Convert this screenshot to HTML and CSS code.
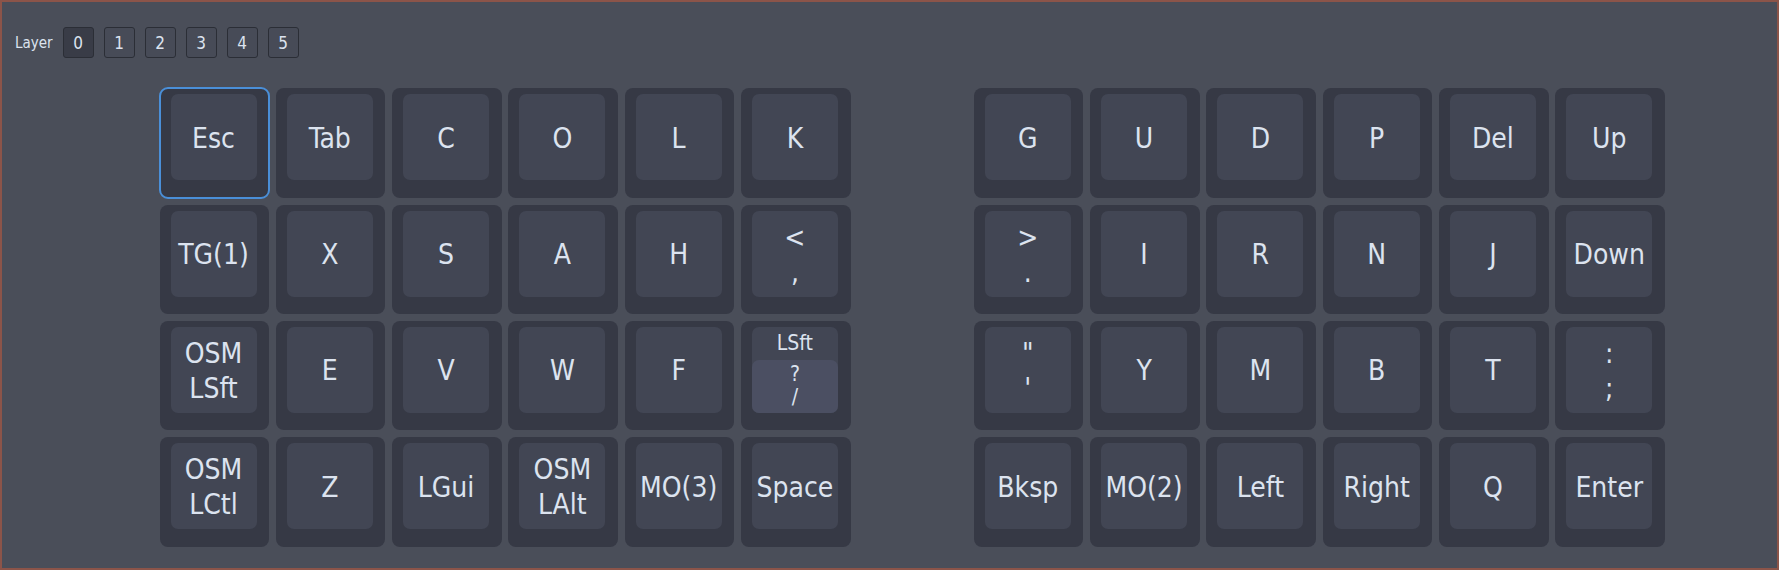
FILE: index.html
```html
<!DOCTYPE html>
<html lang="en">
<head>
    <meta charset="UTF-8">
    <title>Keymap</title>
    <link rel="stylesheet" href="styles.css">
</head>
<body>
    <div class="window">
        <!-- Layer selector -->
        <div class="layer-bar">
            <span class="layer-label">Layer</span>
            <button class="layer-btn active">0</button>
            <button class="layer-btn">1</button>
            <button class="layer-btn">2</button>
            <button class="layer-btn">3</button>
            <button class="layer-btn">4</button>
            <button class="layer-btn">5</button>
        </div>

        <div class="board">
            <!-- Left half -->
            <div class="half">
                <div class="key selected"><div class="cap">Esc</div></div>
                <div class="key"><div class="cap">Tab</div></div>
                <div class="key"><div class="cap">C</div></div>
                <div class="key"><div class="cap">O</div></div>
                <div class="key"><div class="cap">L</div></div>
                <div class="key"><div class="cap">K</div></div>

                <div class="key"><div class="cap">TG(1)</div></div>
                <div class="key"><div class="cap">X</div></div>
                <div class="key"><div class="cap">S</div></div>
                <div class="key"><div class="cap">A</div></div>
                <div class="key"><div class="cap">H</div></div>
                <div class="key"><div class="cap"><span>&lt;</span><span>,</span></div></div>

                <div class="key"><div class="cap"><span>OSM</span><span>LSft</span></div></div>
                <div class="key"><div class="cap">E</div></div>
                <div class="key"><div class="cap">V</div></div>
                <div class="key"><div class="cap">W</div></div>
                <div class="key"><div class="cap">F</div></div>
                <div class="key">
                    <div class="cap split">
                        <div class="hold-label">LSft</div>
                        <div class="tap-part"><span>?</span><span>/</span></div>
                    </div>
                </div>

                <div class="key"><div class="cap"><span>OSM</span><span>LCtl</span></div></div>
                <div class="key"><div class="cap">Z</div></div>
                <div class="key"><div class="cap">LGui</div></div>
                <div class="key"><div class="cap"><span>OSM</span><span>LAlt</span></div></div>
                <div class="key"><div class="cap">MO(3)</div></div>
                <div class="key"><div class="cap">Space</div></div>
            </div>

            <!-- Right half -->
            <div class="half">
                <div class="key"><div class="cap">G</div></div>
                <div class="key"><div class="cap">U</div></div>
                <div class="key"><div class="cap">D</div></div>
                <div class="key"><div class="cap">P</div></div>
                <div class="key"><div class="cap">Del</div></div>
                <div class="key"><div class="cap">Up</div></div>

                <div class="key"><div class="cap"><span>&gt;</span><span>.</span></div></div>
                <div class="key"><div class="cap">I</div></div>
                <div class="key"><div class="cap">R</div></div>
                <div class="key"><div class="cap">N</div></div>
                <div class="key"><div class="cap">J</div></div>
                <div class="key"><div class="cap">Down</div></div>

                <div class="key"><div class="cap"><span>"</span><span>'</span></div></div>
                <div class="key"><div class="cap">Y</div></div>
                <div class="key"><div class="cap">M</div></div>
                <div class="key"><div class="cap">B</div></div>
                <div class="key"><div class="cap">T</div></div>
                <div class="key"><div class="cap"><span>:</span><span>;</span></div></div>

                <div class="key"><div class="cap">Bksp</div></div>
                <div class="key"><div class="cap">MO(2)</div></div>
                <div class="key"><div class="cap">Left</div></div>
                <div class="key"><div class="cap">Right</div></div>
                <div class="key"><div class="cap">Q</div></div>
                <div class="key"><div class="cap">Enter</div></div>
            </div>
        </div>
    </div>
</body>
</html>
```

FILE: styles.css
```css
html, body {
    margin: 0;
    padding: 0;
    height: 100%;
}

body {
    background-color: #4a4e59;
    color: #dce3ef;
    font-family: "DejaVu Sans Condensed", "DejaVu Sans", sans-serif;
}

/* Outer window frame */
.window {
    box-sizing: border-box;
    height: 100vh;
    border: 2px solid #8c5449;
}

/* Layer selector row */
.layer-bar {
    display: flex;
    align-items: center;
    height: 31px;
    padding: 25px 0 0 13px;
}

.layer-label {
    font-size: 15px;
    margin-right: 10px;
}

.layer-btn {
    box-sizing: border-box;
    width: 31px;
    height: 31px;
    margin-right: 10px;
    padding: 0;
    border: 1px solid #2b2e36;
    border-radius: 3px;
    background-color: #474b57;
    color: #dce3ef;
    font-family: inherit;
    font-size: 17px;
}

.layer-btn.active {
    background-color: #393c47;
}

/* Keyboard halves */
.board {
    display: flex;
    gap: 123.3px;
    padding: 30.3px 0 0 157.5px;
}

.half {
    display: grid;
    grid-template-columns: repeat(6, 109.6px);
    grid-auto-rows: 109.6px;
    gap: 6.7px;
}

.key {
    background-color: #363945;
    border-radius: 8px;
}

.key.selected {
    outline: 2px solid #4a8fd8;
    outline-offset: -1px;
}

.cap {
    box-sizing: border-box;
    width: 86px;
    height: 86px;
    margin: 6px 0 0 11px;
    padding-top: 2px;
    background-color: #424654;
    border-radius: 7px;
    display: flex;
    flex-direction: column;
    align-items: center;
    justify-content: center;
    font-size: 28px;
    line-height: 35px;
}

/* Hold/tap key: hold action on top, tap action highlighted below */
.cap.split {
    justify-content: flex-start;
    padding-top: 0;
}

.hold-label {
    height: 33px;
    font-size: 21px;
    line-height: 33px;
}

.tap-part {
    width: 100%;
    height: 53px;
    background-color: #4b4f62;
    border-radius: 7px;
    display: flex;
    flex-direction: column;
    align-items: center;
    justify-content: center;
    font-size: 21px;
    line-height: 23px;
}
```
